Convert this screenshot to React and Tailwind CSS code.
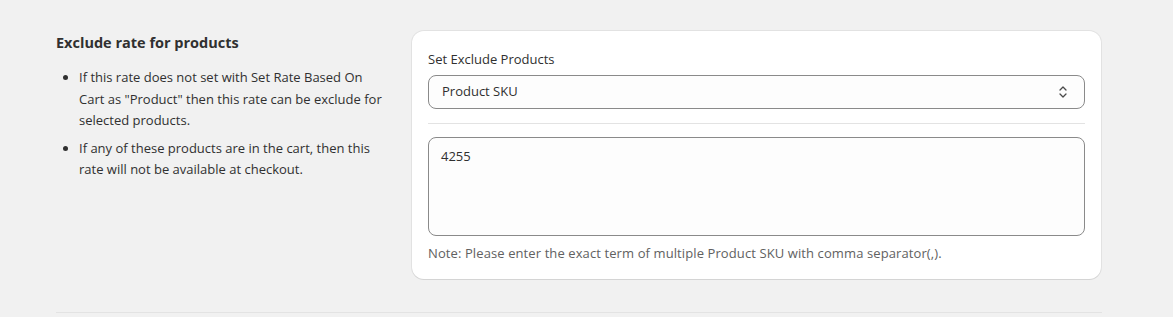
import React from "react";

export default function App() {
  return (
    <div className="min-h-[317px] w-full bg-[#f1f1f1] text-[#303030]" style={{ fontFamily: "'Open Sans', 'Noto Sans', sans-serif" }}>
      <div className="ml-[56px] w-[1046px] pt-[31px]">
        <div className="flex">
          <div className="w-[356px] shrink-0 pt-[2px] pr-[28px]">
            <h2 className="text-[14.5px] font-bold leading-[20px] text-[#303030]">Exclude rate for products</h2>
            <ul className="mt-[14px] list-disc pl-[23px] text-[13px] leading-[21.6px] text-[#303030] marker:text-[#303030]">
              <li>If this rate does not set with Set Rate Based On Cart as "Product" then this rate can be exclude for selected products.</li>
              <li className="mt-[6px]">If any of these products are in the cart, then this rate will not be available at checkout.</li>
            </ul>
          </div>
          <div className="w-[689px] shrink-0 rounded-[12px] bg-white px-[16px] pt-[18px] pb-[16px] shadow-[0_1px_0_0_rgba(26,26,26,0.07),0_0_0_1px_rgba(0,0,0,0.06)]">
            <label className="block text-[13px] leading-[20px] text-[#303030]">Set Exclude Products</label>
            <div className="mt-[6px] flex h-[34px] items-center justify-between rounded-[8px] border border-[#8a8a8a] bg-[#fdfdfd] pl-[13px] pr-[15px]">
              <span className="text-[13px] text-[#303030]">Product SKU</span>
              <svg width="12" height="16" viewBox="0 0 12 16" fill="none" stroke="#4a4a4a" strokeWidth="1.3" strokeLinecap="round" strokeLinejoin="round">
                <path d="M3 6l3-3 3 3" />
                <path d="M3 10l3 3 3-3" />
              </svg>
            </div>
            <div className="mt-[14px] mb-[13px] h-px bg-[#e3e3e3]" />
            <div className="h-[99px] rounded-[8px] border border-[#8a8a8a] bg-[#fdfdfd] px-[12px] pt-[8px] text-[13px] leading-[20px] text-[#303030]">4255</div>
            <p className="mt-[7px] text-[13px] leading-[20px] tracking-[0.1px] text-[#616161]">Note: Please enter the exact term of multiple Product SKU with comma separator(,).</p>
          </div>
        </div>
        <div className="mt-[33px] h-px bg-[#e3e3e3]" />
      </div>
    </div>
  );
}
